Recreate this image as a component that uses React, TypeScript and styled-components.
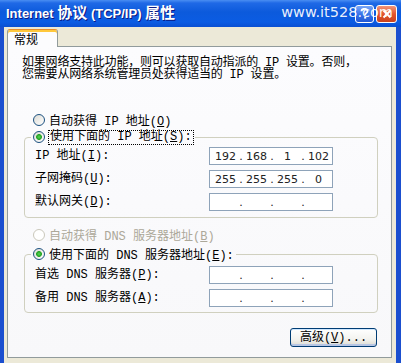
import React from 'react';
import styled, { createGlobalStyle } from 'styled-components';

const GlobalStyle = createGlobalStyle`
  html, body {
    margin: 0;
    padding: 0;
    overflow: hidden;
    background: #ffffff;
  }
  * {
    box-sizing: border-box;
  }
`;

const Window = styled.div`
  width: 401px;
  height: 363px;
  display: flex;
  flex-direction: column;
  background: #1b4fcf;
  font-family: "Liberation Mono", "Noto Sans CJK SC", monospace;
  font-size: 12px;
  color: #000;
  overflow: hidden;
`;

const TitleBar = styled.div`
  position: relative;
  height: 27px;
  flex-shrink: 0;
  display: flex;
  align-items: center;
  padding: 0 4px 0 6px;
  background: linear-gradient(
    to bottom,
    #4a8ef2 0px,
    #1f69e6 3px,
    #0c5adc 12px,
    #0b5ce3 22px,
    #0a4fd2 27px
  );
`;

const Title = styled.div`
  flex: 1;
  font-family: "Liberation Sans", "Noto Sans CJK SC", sans-serif;
  font-weight: bold;
  font-size: 13px;
  color: #ffffff;
  text-shadow: 1px 1px #0a1883;
  white-space: nowrap;
  line-height: 16px;
`;

const TitleCjk = styled.span`
  font-size: 15px;
`;

const CaptionButton = styled.div<{ $tone: 'help' | 'close' }>`
  width: ${p => (p.$tone === 'close' ? 21 : 19)}px;
  height: 18px;
  margin-left: 2px;
  border: 1px solid #ffffff;
  border-radius: 3px;
  background: ${p =>
    p.$tone === 'close'
      ? 'linear-gradient(#f2957a, #e2562f 50%, #c9421d)'
      : 'linear-gradient(#7aa6f6, #3a74ea 50%, #2259d4)'};
  display: flex;
  align-items: center;
  justify-content: center;
`;

const Watermark = styled.div`
  position: absolute;
  right: 8px;
  top: 4px;
  font-family: "DejaVu Sans", sans-serif;
  font-size: 14.5px;
  line-height: 17px;
  color: rgba(255, 255, 255, 0.92);
  white-space: nowrap;
`;

const Body = styled.div`
  flex: 1;
  margin: 0 5px 0 4px;
  padding: 2px 4px 0 3px;
  background: #ece9d8;
  display: flex;
  flex-direction: column;
`;

const TabStrip = styled.div`
  display: flex;
`;

const Tab = styled.div`
  position: relative;
  z-index: 1;
  width: 51px;
  height: 18px;
  margin-bottom: -1px;
  padding: 2px 0 0 6px;
  background: #fcfcfe;
  border: 1px solid #919b9c;
  border-top-color: #e68b2c;
  border-bottom: none;
  border-radius: 3px 3px 0 0;
  box-shadow: inset 0 2px 0 #ffc83c;
  font-family: "Noto Sans CJK SC", sans-serif;
  line-height: 14px;
`;

const Page = styled.div`
  height: 312px;
  border: 1px solid #919b9c;
  background: linear-gradient(#fcfcfe, #f8f8fa);
  padding: 10px 13px 0 14px;
  display: flex;
  flex-direction: column;
`;

const IntroLine = styled.div`
  height: 12px;
  line-height: 12px;
  letter-spacing: -0.2px;
  white-space: nowrap;
`;

const RadioRow = styled.div<{ $gap: number; $disabled?: boolean }>`
  display: flex;
  align-items: center;
  gap: 4px;
  height: 16px;
  margin: ${p => p.$gap}px 0 0 11px;
  color: ${p => (p.$disabled ? '#aca899' : '#000')};
`;

const RadioDot = styled.span<{ $checked?: boolean; $disabled?: boolean }>`
  width: 12px;
  height: 12px;
  flex-shrink: 0;
  border-radius: 50%;
  border: 1px solid ${p => (p.$disabled ? '#cac8bb' : '#1c5180')};
  background: ${p =>
    p.$checked
      ? 'radial-gradient(circle, #5ad65a 0, #21a121 2.5px, transparent 3.3px), linear-gradient(135deg, #dcdbd5, #ffffff)'
      : p.$disabled
      ? '#ffffff'
      : 'linear-gradient(135deg, #dcdbd5, #ffffff)'};
`;

const FocusText = styled.span`
  outline: 1px dotted #000;
  padding: 0 1px;
  line-height: 13px;
`;

const Key = styled.span`
  text-decoration: underline;
`;

const GroupBox = styled.fieldset<{ $gap: number }>`
  margin: ${p => p.$gap}px 0 0 2px;
  width: 354px;
  min-width: 0;
  border: 1px solid #d0d0bf;
  border-radius: 4px;
  padding: 0 44px 0 10px;
`;

const Legend = styled.legend`
  display: flex;
  align-items: center;
  gap: 4px;
  height: 16px;
  margin-left: -4px;
  padding: 0 2px;
`;

const FieldGrid = styled.div<{ $top: number; $bottom: number }>`
  display: grid;
  grid-template-columns: 1fr 124px;
  row-gap: 5px;
  align-items: center;
  padding: ${p => p.$top}px 0 ${p => p.$bottom}px 0;
`;

const FieldLabel = styled.span`
  line-height: 18px;
  white-space: nowrap;
`;

const IpBox = styled.div`
  height: 18px;
  border: 1px solid #8ea3b9;
  background: #ffffff;
  display: flex;
  align-items: center;
  padding-left: 2px;
  font-family: "DejaVu Sans", sans-serif;
  font-size: 11px;
  color: #222;
`;

const IpField = styled.span`
  width: 27px;
  text-align: center;
`;

const IpDot = styled.span`
  width: 4px;
  text-align: center;
`;

const ButtonRow = styled.div`
  display: flex;
  justify-content: flex-end;
  margin: 15px 1px 0 0;
`;

const PushButton = styled.div`
  width: 87px;
  height: 19px;
  border: 1px solid #003c74;
  border-radius: 3px;
  background: linear-gradient(#ffffff, #f3f3ef 60%, #dcdad0);
  box-shadow: inset 0 1px 0 #cee7ff, inset 0 -2px 0 #b7c6e4;
  display: flex;
  align-items: center;
  justify-content: center;
  line-height: 14px;
`;

const HelpGlyph = () => (
  <svg width="9" height="11" viewBox="0 0 9 11">
    <path
      d="M1.5 3.2 C1.5 1.5 2.8 0.8 4.5 0.8 C6.3 0.8 7.5 1.8 7.5 3.2 C7.5 4.8 5.2 5 5.2 7"
      fill="none"
      stroke="#fff"
      strokeWidth="1.8"
    />
    <rect x="4.2" y="8.6" width="2" height="2" fill="#fff" />
  </svg>
);

const CloseGlyph = () => (
  <svg width="10" height="10" viewBox="0 0 10 10">
    <path d="M1.5 1.5 L8.5 8.5 M8.5 1.5 L1.5 8.5" stroke="#fff" strokeWidth="2" />
  </svg>
);

const IpInput = ({ value }: { value?: string[] }) => {
  const parts = value || ['', '', '', ''];
  return (
    <IpBox>
      {parts.map((part, i) => (
        <React.Fragment key={i}>
          <IpField>{part}</IpField>
          {i < 3 && <IpDot>.</IpDot>}
        </React.Fragment>
      ))}
    </IpBox>
  );
};

export default function App() {
  return (
    <>
      <GlobalStyle />
      <Window>
        <TitleBar>
          <Title>
            Internet <TitleCjk>协议</TitleCjk> (TCP/IP) <TitleCjk>属性</TitleCjk>
          </Title>
          <CaptionButton $tone="help">
            <HelpGlyph />
          </CaptionButton>
          <CaptionButton $tone="close">
            <CloseGlyph />
          </CaptionButton>
          <Watermark>www.it528.com</Watermark>
        </TitleBar>
        <Body>
          <TabStrip>
            <Tab>常规</Tab>
          </TabStrip>
          <Page>
            <IntroLine>如果网络支持此功能，则可以获取自动指派的 IP 设置。否则，</IntroLine>
            <IntroLine>您需要从网络系统管理员处获得适当的 IP 设置。</IntroLine>

            <RadioRow $gap={31}>
              <RadioDot />
              <span>
                自动获得 IP 地址(<Key>O</Key>)
              </span>
            </RadioRow>

            <GroupBox $gap={1}>
              <Legend>
                <RadioDot $checked />
                <FocusText>
                  使用下面的 IP 地址(<Key>S</Key>):
                </FocusText>
              </Legend>
              <FieldGrid $top={2} $bottom={6}>
                <FieldLabel>
                  IP 地址(<Key>I</Key>):
                </FieldLabel>
                <IpInput value={['192', '168', '1', '102']} />
                <FieldLabel>
                  子网掩码(<Key>U</Key>):
                </FieldLabel>
                <IpInput value={['255', '255', '255', '0']} />
                <FieldLabel>
                  默认网关(<Key>D</Key>):
                </FieldLabel>
                <IpInput />
              </FieldGrid>
            </GroupBox>

            <RadioRow $gap={9} $disabled>
              <RadioDot $disabled />
              <span>
                自动获得 DNS 服务器地址(<Key>B</Key>)
              </span>
            </RadioRow>

            <GroupBox $gap={3}>
              <Legend>
                <RadioDot $checked />
                <span>
                  使用下面的 DNS 服务器地址(<Key>E</Key>):
                </span>
              </Legend>
              <FieldGrid $top={4} $bottom={5}>
                <FieldLabel>
                  首选 DNS 服务器(<Key>P</Key>):
                </FieldLabel>
                <IpInput />
                <FieldLabel>
                  备用 DNS 服务器(<Key>A</Key>):
                </FieldLabel>
                <IpInput />
              </FieldGrid>
            </GroupBox>

            <ButtonRow>
              <PushButton>
                高级(<Key>V</Key>)...
              </PushButton>
            </ButtonRow>
          </Page>
        </Body>
      </Window>
    </>
  );
}
